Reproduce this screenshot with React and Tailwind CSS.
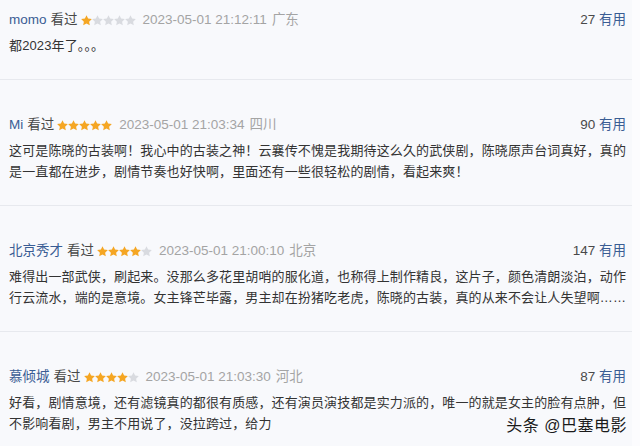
const reviews = [
  {
    name: 'momo',
    stars: 1,
    time: '2023-05-01 21:12:11',
    place: '广东',
    useful: 27,
    text: '都2023年了。。。',
  },
  {
    name: 'Mi',
    stars: 5,
    time: '2023-05-01 21:03:34',
    place: '四川',
    useful: 90,
    text: '这可是陈晓的古装啊！我心中的古装之神！云襄传不愧是我期待这么久的武侠剧，陈晓原声台词真好，真的是一直都在进步，剧情节奏也好快啊，里面还有一些很轻松的剧情，看起来爽！',
  },
  {
    name: '北京秀才',
    stars: 4,
    time: '2023-05-01 21:00:10',
    place: '北京',
    useful: 147,
    text: '难得出一部武侠，刷起来。没那么多花里胡哨的服化道，也称得上制作精良，这片子，颜色清朗淡泊，动作行云流水，端的是意境。女主锋芒毕露，男主却在扮猪吃老虎，陈晓的古装，真的从来不会让人失望啊……',
  },
  {
    name: '慕倾城',
    stars: 4,
    time: '2023-05-01 21:03:30',
    place: '河北',
    useful: 87,
    text: '好看，剧情意境，还有滤镜真的都很有质感，还有演员演技都是实力派的，唯一的就是女主的脸有点肿，但不影响看剧，男主不用说了，没拉跨过，给力',
  },
];

const Stars = ({count}) => (
  <span className="flex items-center">
    {[0, 1, 2, 3, 4].map((i) => (
      <svg key={i} viewBox="1.5 1.5 21 21" className="w-[11px] h-[11px]">
        <path
          d="M12 1.8l3.1 6.6 7.1.9-5.2 4.9 1.3 7.1L12 17.8l-6.3 3.5 1.3-7.1L1.8 9.3l7.1-.9z"
          fill={i < count ? '#f5a623' : '#d9dbe0'}
        />
      </svg>
    ))}
  </span>
);

const Review = ({r, first}) => (
  <div
    className={`border-b border-[#e7e9ee] pl-[9px] pr-[6px] pb-[23px] ${
      first ? 'pt-[10px]' : 'pt-[35px]'
    }`}
  >
    <div className="flex items-center h-[20px] mb-[5px] text-[13.5px] leading-[20px]">
      <span className="text-[#3a5d94]">{r.name}</span>
      <span className="ml-[4px] text-[#494949]">看过</span>
      <span className="ml-[3px]">
        <Stars count={r.stars} />
      </span>
      <span className="ml-[7px] text-[#a4a4a4]">{r.time}</span>
      <span className="ml-[5px] text-[#a4a4a4]">{r.place}</span>
      <span className="ml-auto text-[#494949]">
        {r.useful} <span className="text-[#3a5d94]">有用</span>
      </span>
    </div>
    <p className="w-[618px] text-[13px] leading-[21px] tracking-[0.13px] text-[#333]">
      {r.text}
    </p>
  </div>
);

export default function App() {
  return (
    <div
      className="relative w-[640px] h-[446px] overflow-hidden bg-[#fcfcfe] flex"
      style={{fontFamily: '"Liberation Sans", "Noto Sans CJK SC", sans-serif'}}
    >
      <div className="w-[632px] bg-[#f8f9fc]">
        {reviews.map((r, i) => (
          <Review key={r.name} r={r} first={i === 0} />
        ))}
      </div>
      <div className="absolute right-[13px] bottom-[10px] text-[16px] leading-[20px] text-[#1a1a1a] tracking-[0.5px]">
        头条 @巴塞电影
      </div>
    </div>
  );
}
